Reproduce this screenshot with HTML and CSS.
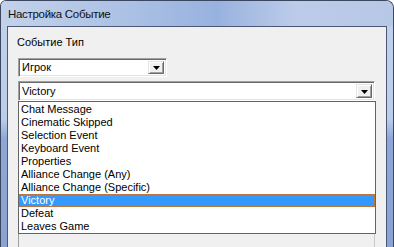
FILE: index.html
```html
<!DOCTYPE html>
<html lang="ru">
<head>
    <meta charset="UTF-8">
    <title>Настройка Событие</title>
    <link rel="stylesheet" href="styles.css">
</head>
<body>
<div class="window">
    <div class="titlebar">
        <span class="title">Настройка Событие</span>
    </div>
    <div class="client">
        <div class="label">Событие Тип</div>

        <div class="combo combo-small">
            <span class="combo-text">Игрок</span>
            <span class="combo-btn">
                <svg width="7" height="4" viewBox="0 0 7 4"><path d="M0 0h7L3.5 4z" fill="#000"/></svg>
            </span>
        </div>

        <div class="combo combo-wide">
            <span class="combo-text">Victory</span>
            <span class="combo-btn">
                <svg width="7" height="4" viewBox="0 0 7 4"><path d="M0 0h7L3.5 4z" fill="#000"/></svg>
            </span>
        </div>

        <ul class="droplist">
            <li>Chat Message</li>
            <li>Cinematic Skipped</li>
            <li>Selection Event</li>
            <li>Keyboard Event</li>
            <li>Properties</li>
            <li>Alliance Change (Any)</li>
            <li>Alliance Change (Specific)</li>
            <li class="selected">Victory</li>
            <li>Defeat</li>
            <li>Leaves Game</li>
        </ul>

        <div class="below"></div>
    </div>
</div>
</body>
</html>
```

FILE: styles.css
```css
body {
    margin: 0;
    width: 394px;
    height: 247px;
    overflow: hidden;
    background: #fff;
    font-family: "Liberation Sans", Arial, sans-serif;
}

.window {
    width: 394px;
    height: 247px;
    box-sizing: border-box;
    border: 1px solid #3b4660;
    border-bottom: none;
    border-radius: 6px 8px 0 0;
    background: linear-gradient(to bottom, #c2d2ec 0%, #bccde9 48%, #8ea7d6 56%, #8aa3d3 100%);
    overflow: hidden;
}

.titlebar {
    height: 25px;
    background: linear-gradient(to right, #c3d2ea 0%, #a9bfe4 35%, #98b2df 55%, #bccbe9 75%, #b7c7e6 100%);
    display: flex;
    align-items: center;
}

.title {
    margin-left: 7px;
    margin-top: 1px;
    font-size: 11.5px;
    letter-spacing: -0.3px;
    color: #111;
}

/* client area */
.client {
    margin: 0 6px;
    height: 221px;
    border: 1px solid #4b5874;
    border-bottom: none;
    background: #f0f0f0;
    padding: 9px 0 0 10px;
    box-sizing: border-box;
    overflow: hidden;
}

.label {
    font-size: 11px;
    line-height: 13px;
    margin-left: -1px;
    margin-bottom: 9px;
    color: #000;
}

.combo {
    display: flex;
    align-items: center;
    box-sizing: border-box;
    background: #fff;
    border-top: 1px solid #a0a0a0;
    border-left: 1px solid #a0a0a0;
    border-right: 1px solid #fff;
    border-bottom: 1px solid #fff;
    box-shadow: inset 1px 1px 0 #696969, inset -1px -1px 0 #e3e3e3;
    padding: 2px;
}

.combo-small {
    width: 149px;
    height: 19px;
    margin-bottom: 4px;
}

.combo-wide {
    width: 357px;
    height: 20px;
}

.combo-text {
    flex-grow: 1;
    font-size: 11px;
    line-height: 13px;
    padding-left: 1px;
    color: #000;
}

.combo-btn {
    width: 16px;
    height: 100%;
    box-sizing: border-box;
    background: #f0f0f0;
    border-top: 1px solid #e3e3e3;
    border-left: 1px solid #e3e3e3;
    border-right: 1px solid #696969;
    border-bottom: 1px solid #696969;
    box-shadow: inset 1px 1px 0 #fff, inset -1px -1px 0 #a0a0a0;
    display: flex;
    align-items: center;
    justify-content: center;
}

.combo-btn svg {
    display: block;
    margin-top: 1px;
}

/* open drop-down list */
.droplist {
    list-style-type: none;
    margin: 0;
    width: 358px;
    box-sizing: border-box;
    border: 1px solid #646464;
    background: #fff;
    padding: 1px 0 0 0;
}

.droplist li {
    height: 13px;
    line-height: 13px;
    font-size: 11px;
    padding-left: 2px;
    color: #000;
    box-sizing: border-box;
    white-space: nowrap;
}

.droplist li.selected {
    background: #3399ff;
    color: #fff;
    outline: 1px dotted #b8743c;
    outline-offset: -1px;
}

.below {
    width: 357px;
    height: 20px;
    box-sizing: border-box;
    border-left: 1px solid #a0a0a0;
    border-right: 1px solid #c8c8c8;
}
```
